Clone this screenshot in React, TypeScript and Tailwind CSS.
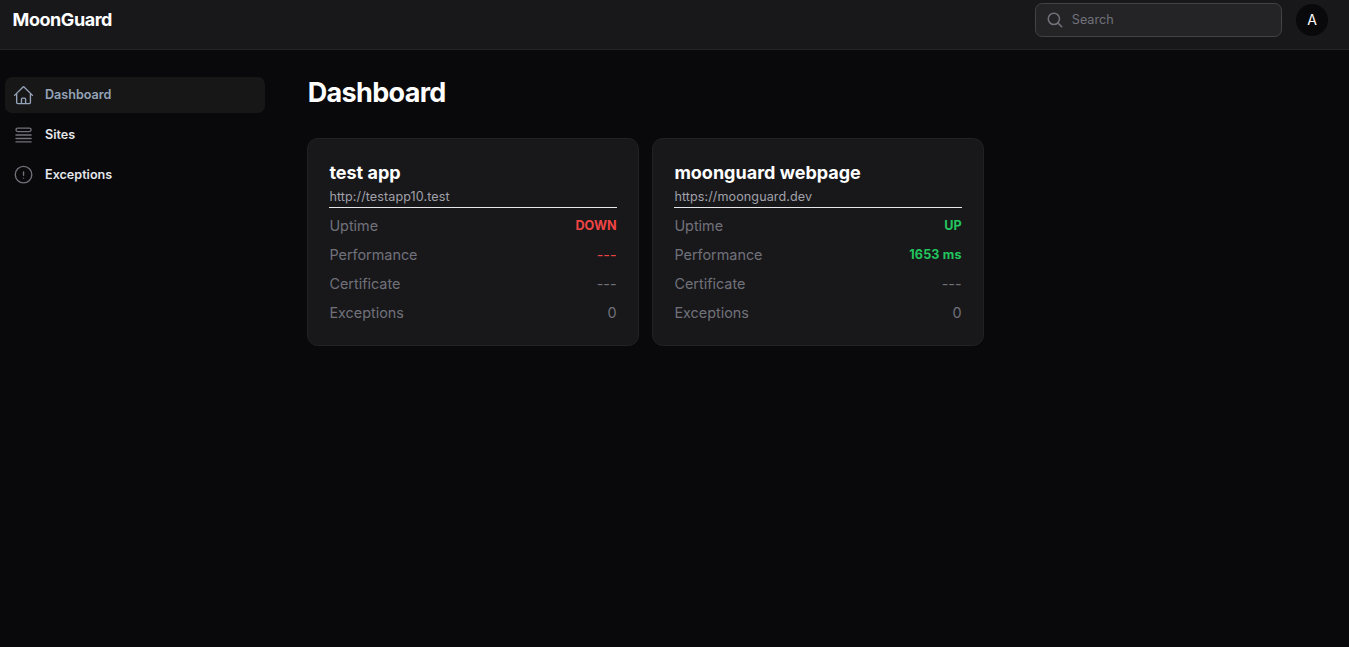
import type { ReactNode } from "react";

function Icon({
  children,
  className,
  viewBox = "0 0 24 24",
}: {
  children: ReactNode;
  className: string;
  viewBox?: string;
}) {
  return (
    <svg
      viewBox={viewBox}
      fill="none"
      stroke="currentColor"
      strokeWidth={1.5}
      strokeLinecap="round"
      strokeLinejoin="round"
      className={className}
      aria-hidden="true"
    >
      {children}
    </svg>
  );
}

const navItems = [
  {
    label: "Dashboard",
    active: true,
    viewBox: "0.5 -0.4 24 24",
    icon: (
      <path d="M2.25 12l8.954-8.955c.44-.439 1.152-.439 1.591 0L21.75 12M4.5 9.75v10.125c0 .621.504 1.125 1.125 1.125H9.75v-4.875c0-.621.504-1.125 1.125-1.125h2.25c.621 0 1.125.504 1.125 1.125V21h4.125c.621 0 1.125-.504 1.125-1.125V9.75M8.25 21h8.25" />
    ),
  },
  {
    label: "Sites",
    active: false,
    viewBox: "0.5 0 24 24",
    icon: (
      <path d="M3.75 12h16.5m-16.5 3.75h16.5M3.75 19.5h16.5M5.625 4.5h12.75a1.875 1.875 0 010 3.75H5.625a1.875 1.875 0 010-3.75z" />
    ),
  },
  {
    label: "Exceptions",
    active: false,
    viewBox: "0.5 0.4 24 24",
    icon: <path d="M12 9v3.75m9-.75a9 9 0 11-18 0 9 9 0 0118 0zm-9 3.75h.008v.008H12v-.008z" />,
  },
];

const plain = "text-[14.4px] text-[#71717a]";

const sites = [
  {
    name: "test app",
    url: "http://testapp10.test",
    rows: [
      { label: "Uptime", value: "DOWN", style: "text-[12.6px] font-bold text-[#ef4444]" },
      { label: "Performance", value: "---", style: "text-[14.4px] text-[#ef4444]" },
      { label: "Certificate", value: "---", style: plain },
      { label: "Exceptions", value: "0", style: plain },
    ],
  },
  {
    name: "moonguard webpage",
    url: "https://moonguard.dev",
    rows: [
      { label: "Uptime", value: "UP", style: "text-[12.6px] font-bold text-[#22c55e]" },
      { label: "Performance", value: "1653 ms", style: "text-[12.6px] font-bold tracking-[0.15px] text-[#22c55e]" },
      { label: "Certificate", value: "---", style: plain },
      { label: "Exceptions", value: "0", style: plain },
    ],
  },
];

export default function App() {
  return (
    <div className="flex h-screen flex-col overflow-hidden bg-[#09090b] font-['Inter',sans-serif] text-white">
      <header className="flex h-[50px] shrink-0 items-start justify-between border-b border-[#252527] bg-[#18181a] pt-[3px] pr-[21px] pl-[12.6px]">
        <div className="text-[18px] leading-[34px] font-bold tracking-tight">MoonGuard</div>
        <div className="flex items-center gap-[14px]">
          <label className="flex h-[34px] w-[247px] items-center gap-[8px] rounded-[7.2px] border border-[#434347] bg-[#242427] pl-[9.8px] text-[#71717a]">
            <Icon className="size-[18px] shrink-0 stroke-2">
              <path d="M21 21l-5.197-5.197m0 0A7.5 7.5 0 105.196 5.196a7.5 7.5 0 0010.607 10.607z" />
            </Icon>
            <input
              type="search"
              placeholder="Search"
              className="min-w-0 flex-1 bg-transparent text-[12.6px] outline-none placeholder:text-[#71717a]"
            />
          </label>
          <div className="flex size-8 items-center justify-center rounded-full bg-[#09090b] text-[14px] leading-none">A</div>
        </div>
      </header>
      <div className="flex flex-1">
        <nav className="flex w-[270px] flex-col gap-1 px-[5px] pt-[27px]">
          {navItems.map((item) => (
            <a
              key={item.label}
              href="#"
              className={
                item.active
                  ? "flex h-9 items-center gap-[10px] rounded-[7.2px] bg-[#171717] pl-2 text-[#94a3b8]"
                  : "flex h-9 items-center gap-[10px] rounded-[7.2px] pl-2 text-[#e5e7eb]"
              }
            >
              <Icon
                viewBox={item.viewBox}
                className={item.active ? "size-[22px] shrink-0" : "size-[22px] shrink-0 text-[#71717a]"}
              >
                {item.icon}
              </Icon>
              <span className="text-[12.6px] leading-[18px] font-semibold">{item.label}</span>
            </a>
          ))}
        </nav>
        <main className="flex-1 pt-[25px] pl-[37px]">
          <h1 className="pl-[0.8px] text-[27px] leading-[36px] font-bold tracking-tight">Dashboard</h1>
          <div className="mt-[27px] flex gap-[13px]">
            {sites.map((site) => (
              <section
                key={site.name}
                className="h-[208px] w-[332px] rounded-[10.8px] border border-[#222225] bg-[#18181a] px-[21.4px] pt-[21px]"
              >
                <h2 className="text-[18px] leading-[25px] font-bold">{site.name}</h2>
                <div className="border-b border-[#e5e7eb] pt-[3px] pb-px text-[12.6px] leading-[18px] tracking-[0.08px] text-[#a1a1aa]">
                  {site.url}
                </div>
                <dl className="mt-[7px] flex flex-col gap-[7px]">
                  {site.rows.map((row) => (
                    <div key={row.label} className="flex h-[22px] items-center justify-between">
                      <dt className="text-[14.4px] text-[#71717a]">{row.label}</dt>
                      <dd className={row.style}>{row.value}</dd>
                    </div>
                  ))}
                </dl>
              </section>
            ))}
          </div>
        </main>
      </div>
    </div>
  );
}
